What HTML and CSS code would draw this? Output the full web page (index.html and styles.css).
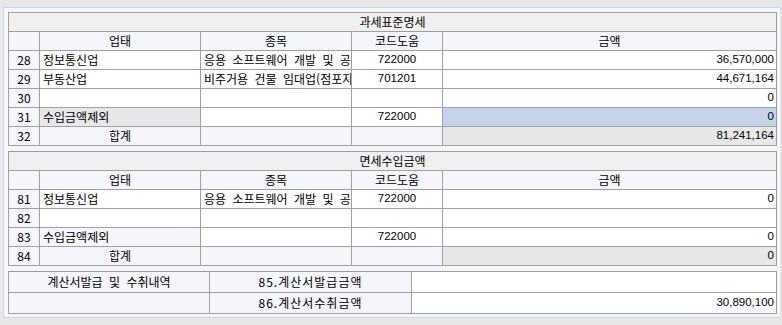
FILE: index.html
```html
<!DOCTYPE html>
<html lang="ko">
<head>
<meta charset="utf-8">
<link rel="stylesheet" href="styles.css">
</head>
<body>
<div class="panel">
  <div class="grid g5">
    <div class="c title">과세표준명세</div>
    <div class="c hd"></div><div class="c hd ctr">업태</div><div class="c hd ctr">종목</div><div class="c hd ctr">코드도움</div><div class="c hd ctr">금액</div>

    <div class="c no">28</div><div class="c w">정보통신업</div><div class="c w">응용 소프트웨어 개발 및 공급업</div><div class="c w ctr num">722000</div><div class="c w r num">36,570,000</div>
    <div class="c no">29</div><div class="c w">부동산업</div><div class="c w">비주거용 건물 임대업(점포자가)</div><div class="c w ctr num">701201</div><div class="c w r num">44,671,164</div>
    <div class="c no">30</div><div class="c w"></div><div class="c w"></div><div class="c w"></div><div class="c w r num">0</div>
    <div class="c no">31</div><div class="c g">수입금액제외</div><div class="c w"></div><div class="c w ctr num">722000</div><div class="c b r num">0</div>
    <div class="c no">32</div><div class="c lt ctr">합계</div><div class="c lt"></div><div class="c lt"></div><div class="c g r num">81,241,164</div>
  </div>

  <div class="grid g5">
    <div class="c title">면세수입금액</div>
    <div class="c hd"></div><div class="c hd ctr">업태</div><div class="c hd ctr">종목</div><div class="c hd ctr">코드도움</div><div class="c hd ctr">금액</div>

    <div class="c no">81</div><div class="c w">정보통신업</div><div class="c w">응용 소프트웨어 개발 및 공급업</div><div class="c w ctr num">722000</div><div class="c w r num">0</div>
    <div class="c no">82</div><div class="c w"></div><div class="c w"></div><div class="c w"></div><div class="c w"></div>
    <div class="c no">83</div><div class="c lt">수입금액제외</div><div class="c w"></div><div class="c w ctr num">722000</div><div class="c w r num">0</div>
    <div class="c no">84</div><div class="c lt ctr">합계</div><div class="c lt"></div><div class="c lt"></div><div class="c g r num">0</div>
  </div>

  <div class="grid g3">
    <div class="c lt ctr">계산서발급 및 수취내역</div><div class="c lt ctr sp">85.계산서발급금액</div><div class="c w"></div>
    <div class="c lt"></div><div class="c lt ctr sp">86.계산서수취금액</div><div class="c w r num">30,890,100</div>
  </div>
</div>
</body>
</html>
```
FILE: styles.css
```css
html, body {
  margin: 0;
  padding: 0;
}
body {
  background: #e8e8e8;
  font-family: "Noto Sans CJK KR", "Liberation Sans", sans-serif;
  font-size: 12px;
  color: #000;
}
.panel {
  margin: 7px 0 0 3px;
  width: 777px;
  box-sizing: border-box;
  border: 1px solid #cdd8e6;
  border-right: none;
  background: #f4f6fa;
  padding: 4px 4px 3px 4px;
  display: flex;
  flex-direction: column;
  gap: 5px;
}
.grid {
  display: grid;
  gap: 1px;
  padding: 1px;
  background: #a0a0a0;
  width: 769px;
  box-sizing: border-box;
}
.g5 {
  grid-template-columns: 30px 160px 150px 90px 333px;
  grid-auto-rows: 18px;
}
.g3 {
  grid-template-columns: 200px 201px 364px;
  grid-auto-rows: 20px;
}
.c {
  display: flex;
  align-items: center;
  padding: 0 3px;
  white-space: nowrap;
  overflow: hidden;
  line-height: 1;
  word-spacing: 3px;
  box-sizing: border-box;
}
.title {
  grid-column: 1 / -1;
  background: #f0f0f0;
  justify-content: center;
}
.hd { background: #f4f6fb; }
.no { background: #f4f6fb; justify-content: center; }
.w { background: #ffffff; }
.lt { background: #f4f6fb; }
.g { background: #e8e8e8; }
.b { background: #c4d2ea; }
.ctr { justify-content: center; }
.r { justify-content: flex-end; padding-right: 2px; }
.num { font-family: "Liberation Sans", sans-serif; font-size: 11.5px; }
.sp { letter-spacing: 1px; }
```
